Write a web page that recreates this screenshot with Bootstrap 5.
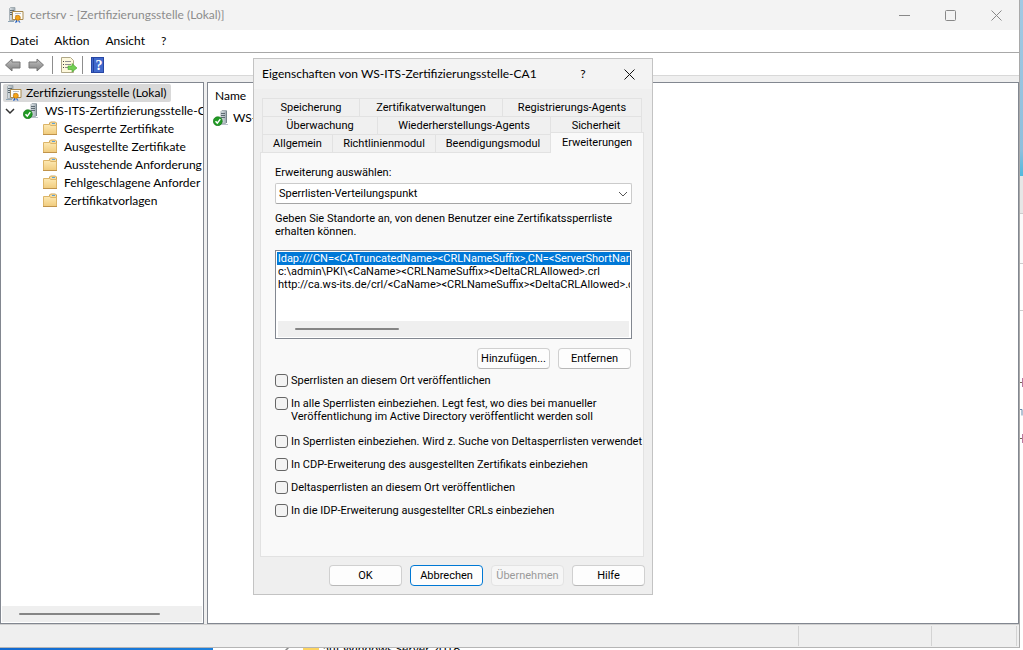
<!DOCTYPE html>
<html lang="de">
<head>
<meta charset="utf-8">
<meta name="viewport" content="width=device-width, initial-scale=1">
<title>certsrv - [Zertifizierungsstelle (Lokal)]</title>
<link href="https://cdn.jsdelivr.net/npm/bootstrap@5.3.0/dist/css/bootstrap.min.css" rel="stylesheet">
<style>
body{font:12px/18px Lato,"Open Sans",sans-serif;color:#000;background:#fff;height:100vh}
svg{display:block;flex:none}
.win{background:#efefef;border-right:1px solid #a9a9a9;border-bottom:1px solid #b5b5b5}
.titlebar{height:30px;background:#f3f3f3;color:#8c8c8c;padding-left:8px}
.titlebar .label{padding-left:6px}
.capbtn{width:46px;height:30px;border:0;background:none;padding:0;display:flex;align-items:center;justify-content:center}
.menubar{height:23px;background:#fff;border-bottom:1px solid #a8a8a8;padding-left:10px;gap:16px}
.menubar a{color:#000;text-decoration:none}
.tools{height:23px;background:#fff;border-bottom:1px solid #d8d8d8;padding:2px 0 0 4px}
.tools button{border:0;background:none;padding:0}
.vsep{width:1px;height:18px;background:#8d8d8d}
.panes{padding-top:6px;gap:3px}
.pane{border:1px solid #828790;background:#fff;overflow:hidden}
.treepane{width:204px}
.tree,.tree ul{list-style:none;margin:0;padding:0}
.tree a,.res a{color:#000;text-decoration:none;white-space:nowrap;display:flex;align-items:center;height:18px}
.tree{padding:1px 0 0 2px}
.tree span{padding-left:4px}
.tree .hot{background:#d9d9d9;border-radius:2px;width:168px;padding-left:3px}
.tree .hosts>li>a>span{padding-left:6px}
.tree .sub a{padding-left:15px}
.tree .sub span{padding-left:6px}
.hbar{height:16px;background:#efefef;margin:0 1px 1px;padding-left:17px;display:flex;align-items:center}
.hbar i{display:block;height:2px;background:#858585;border-radius:1px}
.res{padding:4px 7px 4px 5px}
.res div{padding-left:2px}
.statbar{height:23px;border-top:1px solid #d0d0d0;padding:1px 2px 1px 0}
.statbar span{border-right:1px solid #d3d3d3}
.below{height:2px;overflow:hidden}
.blue{width:213px;height:2px;background:linear-gradient(90deg,#1168cf,#1c80dc)}
.edge{width:3px;background:linear-gradient(#a3c9e3 0,#8fbfdd 150px,#4fb9dd 176px,#e6e6e6 176px,#e6e6e6 213px,#ccc 213px,#ccc 214px,#fafafa 214px,#fafafa 263px,#ccc 263px,#ccc 264px,#fff 264px,#fff 310px,#ccc 310px,#ccc 311px,#fff 311px)}
.dlg{position:absolute;left:253px;top:58px;width:400px;background:#efefef;border:1px solid #c3c3c3;font:11px/13px Roboto,"Liberation Sans",Arial,sans-serif}
.dlghead{height:30px;background:#f3f3f3;font:12px/18px Lato,"Open Sans",sans-serif;padding-left:8px}
.tabset{margin:9px 10px 0 8px}
.tabrow{display:grid}
.tabrow button{height:18px;border:1px solid #e2e2e2;border-width:1px 0 0 1px;background:#f0f0f0;padding:0;line-height:17px;white-space:nowrap;color:#000}
.tabrow button:last-child{border-right-width:1px}
.t1{grid-template-columns:97fr 143fr 140fr}
.t2{grid-template-columns:115fr 173fr 92fr}
.t3{grid-template-columns:70fr 103fr 115fr 94fr;margin-right:-2px}
.tabrow .on{height:21px;margin:-2px 0 -1px;background:#f9f9f9;z-index:1;padding-bottom:2px}
.sheet{margin:0 8px 0 6px;border:1px solid #e2e2e2;background:#f9f9f9;padding:13px 11px 0 14px;height:405px}
.dlg .form-select{height:21px;font:inherit;color:#000;border:1px solid #cbcbcb;border-bottom-color:#a5a5a5;border-radius:2px;padding:0 20px 0 3px;background:#fff url("data:image/svg+xml,%3Csvg xmlns='http://www.w3.org/2000/svg' viewBox='0 0 10 6'%3E%3Cpath fill='none' stroke='%23555' d='M1 1l4 4 4-4'/%3E%3C/svg%3E") no-repeat right 3px center/10px 6px}
.lister{border:1px solid #828790;background:#fff;height:89px;padding:1px;margin-top:12px;overflow:hidden}
.lister ul{list-style:none;margin:0;padding:0;height:69px}
.lister li{height:13px;padding-left:1px;white-space:nowrap;overflow:hidden}
.lister li[aria-selected=true]{background:#0078d7;color:#fff}
.dlg .btn{width:73px;height:21px;padding:0;font:inherit;color:#000;background:#fdfdfd;border:1px solid #d0d0d0;border-bottom-color:#b8b8b8;border-radius:4px;white-space:nowrap}
.dlg .btn.dflt{border-color:#0078d4}
.dlg .btn:disabled{color:#9a9a9a;background:#f6f6f6;border-color:#e3e3e3;opacity:1}
.pair{margin:9px 1px 0 0}
.answers{padding:8px 7px}
.opts{display:grid;row-gap:10px;margin-top:5px;margin-right:-6px}
.opt{display:flex;gap:3px;white-space:nowrap}
.opt.tall{padding-bottom:2px}
.opt input{appearance:none;width:13px;height:13px;margin:0;border:1px solid #666;border-radius:3px;background:#f3f3f3;flex:none}
</style>
</head>
<body class="d-flex flex-column overflow-hidden position-relative">
<svg width="0" height="0" class="position-absolute" aria-hidden="true">
 <defs>
  <linearGradient id="gf" x2="0" y2="1"><stop stop-color="#fde9b4"/><stop offset="1" stop-color="#f0cb7c"/></linearGradient>
  <linearGradient id="ga" x2="0" y2="1"><stop stop-color="#c4c4c4"/><stop offset="1" stop-color="#7e7e7e"/></linearGradient>
  <linearGradient id="gs"><stop stop-color="#dfe5e9"/><stop offset="1" stop-color="#9aa6ae"/></linearGradient>
  <symbol id="folder" viewBox="0 0 16 16"><path d="M7.500 2l1-1h5l1 1v4h-7z" fill="#f6dca0" stroke="#d0a65a"/><path d="M10 2.500h3" stroke="#5ba2d9"/><path d="M1.500 3.500h6l1.500 1h5.500v9h-13z" fill="url(#gf)" stroke="#dcb569"/><path d="M1 13.500h14" stroke="#c0934a"/></symbol>
  <symbol id="server" viewBox="0 0 16 16"><path d="M8 1.500l1-1h4.500v12l-1 1H8z" fill="url(#gs)" stroke="#98a3aa" stroke-width=".8"/><path d="M8 3.500h4M8 5.500h4M8 7.500h4" stroke="#5d6a72"/><path d="M13.500 1v12" stroke="#77848c"/><path d="M7 14.500h8" stroke="#b9c2c8"/><circle cx="4.800" cy="11.200" r="4.500" fill="#219b24" stroke="#127016" stroke-width=".6"/><path d="M2.500 11.200l1.800 1.900 3-4" fill="none" stroke="#fff" stroke-width="1.500"/></symbol>
  <symbol id="ca" viewBox="0 0 16 16"><path d="M1.500 1.500l1-1h4.500v13H1.500z" fill="url(#gs)" stroke="#98a3aa" stroke-width=".8"/><path d="M2 3.500h4M2 5.500h3M2 7.500h2" stroke="#5d6a72"/><path d="M0 14.500h6" stroke="#8fa5b5"/><path d="M4.500 4.500h10.500v8H4.500z" fill="#fffdf6" stroke="#a98a4e"/><path d="M7 6.500h6M7 8.500h2" stroke="#b7bfcc"/><path d="M8.500 12l-1.500 4 2.500-1zM10.500 12l2 4-2-1z" fill="#1e5fc6"/><circle cx="9.800" cy="10.800" r="2.500" fill="#f5a519" stroke="#bd7209" stroke-width=".7"/></symbol>
 </defs>
</svg>
<div class="d-flex flex-grow-1 overflow-hidden">
<main class="win d-flex flex-column flex-grow-1 overflow-hidden">
 <header class="titlebar d-flex align-items-center"><svg width="16" height="16"><use href="#ca"/></svg><span class="label me-auto">certsrv - [Zertifizierungsstelle (Lokal)]</span>
  <button class="capbtn" aria-label="Minimieren"><svg width="11" height="11"><path d="M0 5.500h11" stroke="#888"/></svg></button>
  <button class="capbtn" aria-label="Maximieren"><svg width="11" height="11"><rect x=".5" y=".5" width="10" height="10" rx="1" fill="none" stroke="#888"/></svg></button>
  <button class="capbtn" aria-label="Schließen"><svg width="11" height="11"><path d="M.5.5l10 10M10.500.5l-10 10" stroke="#888"/></svg></button>
 </header>
 <nav class="menubar d-flex align-items-center"><a href="#">Datei</a><a href="#">Aktion</a><a href="#">Ansicht</a><a href="#">?</a></nav>
 <div class="tools d-flex align-items-center">
  <button aria-label="Zurück"><svg width="18" height="16"><path d="M1.500 8l6.500-6v3h8v6H8v3z" fill="url(#ga)" stroke="#777"/></svg></button>
  <button class="ms-1" aria-label="Vorwärts"><svg width="18" height="16"><path d="M17.500 8L11 2v3H3v6h8v3z" fill="url(#ga)" stroke="#777"/></svg></button>
  <span class="vsep mx-2"></span>
  <button aria-label="Liste exportieren"><svg width="17" height="16"><path d="M.5.5h9l3 3v12h-12z" fill="#fdf8dc" stroke="#b0a888"/><path d="M2 4.500h1M2 7.500h1M2 10.500h1" stroke="#444"/><path d="M4 4.500h6M4 7.500h6M4 10.500h3" stroke="#8f8f8f"/><path d="M7 9h4V6.500l5 4.500-5 4v-2.500H7z" fill="#72d054" stroke="#48a42e" stroke-width=".6"/></svg></button>
  <span class="vsep ms-1 me-2"></span>
  <button aria-label="Hilfe"><svg width="14" height="16"><rect x=".5" y=".5" width="12" height="15" fill="#4169cc" stroke="#2746a4"/><path d="M2.500 1v14" stroke="#22429e"/><text x="8" y="12.500" text-anchor="middle" font-family="Liberation Serif" font-size="14" font-weight="700" fill="#fff">?</text></svg></button>
 </div>
 <div class="panes d-flex flex-grow-1 overflow-hidden">
  <section class="pane treepane d-flex flex-column flex-shrink-0">
   <ul class="tree">
    <li><a href="#" class="hot"><svg width="16" height="16"><use href="#ca"/></svg><span>Zertifizierungsstelle (Lokal)</span></a>
     <ul class="hosts"><li><a href="#"><svg width="20" height="16"><path d="M3 6l4 4 4-4" fill="none" stroke="#333" stroke-width="1.500"/></svg><svg width="16" height="16"><use href="#server"/></svg><span>WS-ITS-Zertifizierungsstelle-C</span></a>
      <ul class="ps-4 sub">
       <li><a href="#"><svg width="16" height="16"><use href="#folder"/></svg><span>Gesperrte Zertifikate</span></a></li>
       <li><a href="#"><svg width="16" height="16"><use href="#folder"/></svg><span>Ausgestellte Zertifikate</span></a></li>
       <li><a href="#"><svg width="16" height="16"><use href="#folder"/></svg><span>Ausstehende Anforderung</span></a></li>
       <li><a href="#"><svg width="16" height="16"><use href="#folder"/></svg><span>Fehlgeschlagene Anforder</span></a></li>
       <li><a href="#"><svg width="16" height="16"><use href="#folder"/></svg><span>Zertifikatvorlagen</span></a></li>
      </ul></li></ul></li>
   </ul>
   <div class="hbar mt-auto"><i style="width:77%"></i></div>
  </section>
  <section class="pane res flex-grow-1"><div>Name</div><a href="#" class="mt-1"><svg width="16" height="16" class="me-1"><use href="#server"/></svg>WS-</a></section>
 </div>
 <footer class="statbar d-flex"><span class="flex-grow-1"></span><span style="width:133px"></span><span style="width:85px"></span></footer>
</main>
<div class="edge"><svg width="3" height="600"><path d="M0 382.500h3M0 438.500h3" stroke="#765"/><path d="M2.500 378v9M2.500 434v9" stroke="#b87aa0"/><path d="M0 409.500h2v6" fill="none" stroke="#68a"/></svg></div>
</div>
<div class="below d-flex align-items-center"><div class="blue"></div><svg class="ms-5" width="50" height="16"><path d="M22 12l6-6" stroke="#888" stroke-width="1.500"/><path d="M42 0h16v16H42z" fill="#fcd462"/></svg><svg width="8" height="2"><path d="M0 0h8v2H0z" fill="#fcd462"/></svg><span class="ps-1">auf Windows Server 2016</span></div>

<div class="dlg" role="dialog" aria-labelledby="dt">
 <div class="dlghead d-flex align-items-center"><span id="dt" class="me-auto">Eigenschaften von WS-ITS-Zertifizierungsstelle-CA1</span>
  <button class="capbtn" aria-label="Hilfe">?</button><button class="capbtn" aria-label="Schließen"><svg width="11" height="11"><path d="M.5.5l10 10M10.500.5l-10 10" stroke="#111"/></svg></button></div>
 <div class="tabset" role="tablist">
  <div class="tabrow t1"><button role="tab">Speicherung</button><button role="tab">Zertifikatverwaltungen</button><button role="tab">Registrierungs-Agents</button></div>
  <div class="tabrow t2"><button role="tab">Überwachung</button><button role="tab">Wiederherstellungs-Agents</button><button role="tab">Sicherheit</button></div>
  <div class="tabrow t3"><button role="tab">Allgemein</button><button role="tab">Richtlinienmodul</button><button role="tab">Beendigungsmodul</button><button role="tab" class="on" aria-selected="true">Erweiterungen</button></div>
 </div>
 <div class="sheet">
  <label for="ext" class="d-block">Erweiterung auswählen:</label>
  <select id="ext" class="form-select mt-1"><option>Sperrlisten-Verteilungspunkt</option></select>
  <div class="mt-2">Geben Sie Standorte an, von denen Benutzer eine Zertifikatssperrliste<br>erhalten können.</div>
  <div class="lister"><ul role="listbox" aria-label="Standorte"><li role="option" aria-selected="true">ldap:///CN=&lt;CATruncatedName&gt;&lt;CRLNameSuffix&gt;,CN=&lt;ServerShortNar</li><li role="option">c:\admin\PKI\&lt;CaName&gt;&lt;CRLNameSuffix&gt;&lt;DeltaCRLAllowed&gt;.crl</li><li role="option">http://ca.ws-its.de/crl/&lt;CaName&gt;&lt;CRLNameSuffix&gt;&lt;DeltaCRLAllowed&gt;.c</li></ul><div class="hbar"><i style="width:31%"></i></div></div>
  <div class="pair d-flex justify-content-end gap-2"><button class="btn">Hinzufügen...</button><button class="btn">Entfernen</button></div>
  <div class="opts">
   <label class="opt"><input type="checkbox">Sperrlisten an diesem Ort veröffentlichen</label>
   <label class="opt tall"><input type="checkbox"><span>In alle Sperrlisten einbeziehen. Legt fest, wo dies bei manueller<br>Veröffentlichung im Active Directory veröffentlicht werden soll</span></label>
   <label class="opt"><input type="checkbox">In Sperrlisten einbeziehen. Wird z. Suche von Deltasperrlisten verwendet</label>
   <label class="opt"><input type="checkbox">In CDP-Erweiterung des ausgestellten Zertifikats einbeziehen</label>
   <label class="opt"><input type="checkbox">Deltasperrlisten an diesem Ort veröffentlichen</label>
   <label class="opt"><input type="checkbox">In die IDP-Erweiterung ausgestellter CRLs einbeziehen</label>
  </div>
 </div>
 <div class="answers d-flex justify-content-end gap-2"><button class="btn">OK</button><button class="btn dflt">Abbrechen</button><button class="btn" disabled>Übernehmen</button><button class="btn">Hilfe</button></div>
</div>
<script src="https://cdn.jsdelivr.net/npm/bootstrap@5.3.0/dist/js/bootstrap.bundle.min.js"></script>
</body>
</html>
